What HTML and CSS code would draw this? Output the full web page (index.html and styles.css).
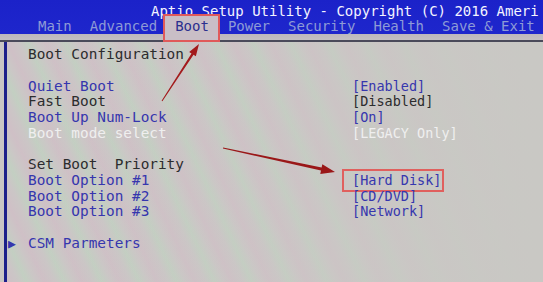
FILE: index.html
```html
<!DOCTYPE html>
<html>
<head>
<meta charset="utf-8">
<link rel="stylesheet" href="styles.css">
</head>
<body>
<div class="screen">
  <header class="header">
    <div class="title">Aptio Setup Utility - Copyright (C) 2016 Ameri</div>
    <nav class="tabs">
      <span class="tab">Main</span>
      <span class="tab">Advanced</span>
      <span class="tab active">Boot</span>
      <span class="tab">Power</span>
      <span class="tab">Security</span>
      <span class="tab">Health</span>
      <span class="tab">Save &amp; Exit</span>
    </nav>
  </header>
  <main class="panel">
    <div class="rows">
      <span class="mark"></span><span class="label dark">Boot Configuration</span><span class="value"></span>
      <span class="mark"></span><span class="label"></span><span class="value"></span>
      <span class="mark"></span><span class="label blue">Quiet Boot</span><span class="value blue">[Enabled]</span>
      <span class="mark"></span><span class="label dark">Fast Boot</span><span class="value dark">[Disabled]</span>
      <span class="mark"></span><span class="label blue">Boot Up Num-Lock</span><span class="value blue">[On]</span>
      <span class="mark"></span><span class="label white">Boot mode select</span><span class="value white">[LEGACY Only]</span>
      <span class="mark"></span><span class="label"></span><span class="value"></span>
      <span class="mark"></span><span class="label dark">Set Boot  Priority</span><span class="value"></span>
      <span class="mark"></span><span class="label blue">Boot Option #1</span><span class="value blue"><span class="boxed">[Hard Disk]</span></span>
      <span class="mark"></span><span class="label blue">Boot Option #2</span><span class="value blue">[CD/DVD]</span>
      <span class="mark"></span><span class="label blue">Boot Option #3</span><span class="value blue">[Network]</span>
      <span class="mark"></span><span class="label"></span><span class="value"></span>
      <span class="mark blue">&#9654;</span><span class="label blue">CSM Parmeters</span><span class="value"></span>
    </div>
  </main>
  <svg class="arrows" width="543" height="282" viewBox="0 0 543 282">
    <polygon fill="#a31a1c" points="161.6,100.7 162.4,101.3 193.5,54.75 195.85,56.3 199,44 189.15,51.9 191.5,53.45"/>
    <polygon fill="#9a1718" points="222.9,148.5 223.1,147.5 321.6,167.6 322.35,164.2 335,172 320.25,174 321,170.6"/>
  </svg>
</div>
</body>
</html>
```

FILE: styles.css
```css
html, body {
  margin: 0;
  padding: 0;
}
body {
  width: 543px;
  height: 282px;
  overflow: hidden;
  font-family: "DejaVu Sans Mono", "Liberation Mono", monospace;
  background: #c9c6c4;
}
.screen {
  position: relative;
  width: 543px;
  height: 282px;
  overflow: hidden;
  display: flex;
  flex-direction: column;
}
.header {
  height: 40px;
  background: linear-gradient(#1b22c9 0, #1e26cc 34px, #bdb8bc 34px, #c3bfc2 40px);
  border-bottom: 2px solid #4a4a5a;
  flex: none;
}
.title {
  padding: 4px 0 0 151px;
  line-height: 14px;
  height: 12px;
  font-size: 14px;
  color: #f4f4ff;
  white-space: nowrap;
}
.tabs {
  display: flex;
  padding-left: 29px;
  height: 24px;
  font-size: 14px;
}
.tab {
  padding: 0 9px;
  line-height: 21px;
  color: #8e9bd6;
  white-space: nowrap;
}
.tab.active {
  background: #c9bec6;
  color: #2b2f8e;
  outline: 2px solid #e05a5a;
  margin: 0 1px 0 -1px;
  padding: 0 9px 0 10px;
}
.panel {
  flex: 1;
  margin-left: 4px;
  border-left: 3px solid #1c1f8a;
  background:
    linear-gradient(90deg, rgba(201,200,196,0) 0%, rgba(201,200,196,0.2) 45%, rgba(201,200,196,0.85) 80%, #c9c8c4 100%),
    repeating-linear-gradient(65deg, #cfc0c6 0, #cbc6c6 10px, #c3cfc2 18px, #cbc7c6 26px, #cfc0c6 34px);
}
.rows {
  display: grid;
  grid-template-columns: 21px 324px 1fr;
  grid-auto-rows: 15.7px;
  padding-top: 5px;
  align-items: center;
}
.mark {
  font-size: 13px;
  padding-left: 1px;
  line-height: 15px;
}
.label {
  font-size: 14.4px;
  line-height: 15px;
  white-space: pre;
}
.value {
  font-size: 13.5px;
  line-height: 15px;
  white-space: pre;
}
.blue { color: #3636ae; }
.dark { color: #2c2c2e; }
.white { color: #efefef; }
.boxed {
  display: inline-block;
  border: 2px solid #e0605e;
  padding: 2px 1px 2px 8px;
  margin: -4px -3px -4px -10px;
}
.arrows {
  position: absolute;
  left: 0;
  top: 0;
  pointer-events: none;
}
```
